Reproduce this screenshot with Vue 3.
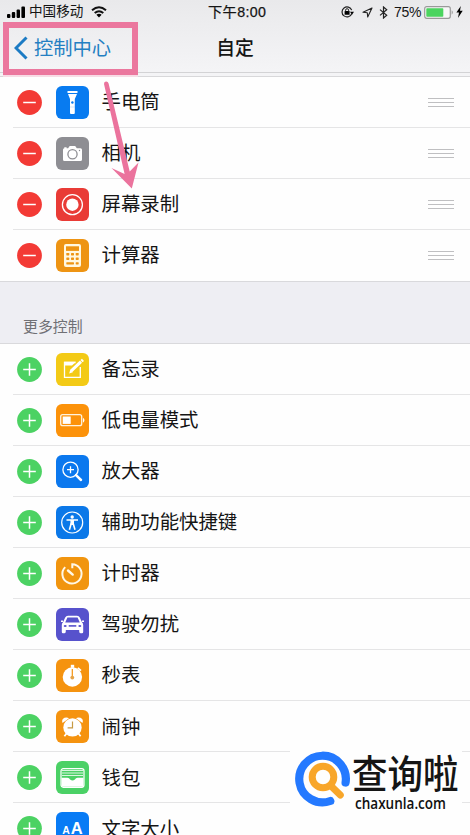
<script setup>
const active = [
  { name: '手电筒', icon: 'torch', color: '#087bf0' },
  { name: '相机', icon: 'camera', color: '#8e8e93' },
  { name: '屏幕录制', icon: 'record', color: '#e93b36' },
  { name: '计算器', icon: 'calc', color: '#ee9413' }
]
const more = [
  { name: '备忘录', icon: 'notes', color: '#f3ca16' },
  { name: '低电量模式', icon: 'power', color: '#fc920a' },
  { name: '放大器', icon: 'magnify', color: '#0b78ee' },
  { name: '辅助功能快捷键', icon: 'access', color: '#0b78e8' },
  { name: '计时器', icon: 'timer', color: '#f1950f' },
  { name: '驾驶勿扰', icon: 'car', color: '#5752cc' },
  { name: '秒表', icon: 'stopwatch', color: '#f5930f' },
  { name: '闹钟', icon: 'alarm', color: '#f5930f' },
  { name: '钱包', icon: 'wallet', color: '#4bd166' },
  { name: '文字大小', icon: 'text', color: '#087bf5' }
]
const sections = [
  { id: 'active', items: active },
  { id: 'more', title: '更多控制', items: more }
]
</script>

<template>
  <main class="screen">
    <header class="header">
      <div class="status">
        <div class="carrier">
          <svg class="signal" width="19" height="12" viewBox="0 0 19 12"><rect x="0" y="8" width="3.4" height="4" rx="1"/><rect x="4.8" y="6" width="3.4" height="6" rx="1"/><rect x="9.6" y="3.5" width="3.4" height="8.5" rx="1"/><rect x="14.4" y="0.5" width="3.6" height="11.5" rx="1"/></svg>
          <span>中国移动</span>
          <svg class="wifi" width="16" height="12" viewBox="0 0 16 12"><g fill="none" stroke="#111" stroke-width="2"><path d="M1 4.3Q8-1.8 15 4.3"/><path d="M3.7 7.1Q8 3.4 12.3 7.1"/></g><path d="M5.4 8.8Q8 6.8 10.6 8.8L8 11.6Z"/></svg>
        </div>
        <time class="clock">下午8:00</time>
        <div class="indicators">
          <svg class="lock" width="13" height="12" viewBox="0 0 13 12"><path d="M10.7 7.7A5 5 0 1 1 10.7 4.1" fill="none" stroke="#222" stroke-width="1.2"/><path d="M9 5.8H13L11 8.8Z"/><rect x="3.6" y="5.1" width="5" height="3.7" rx=".5"/><path d="M4.6 5.5V4.2a1.5 1.5 0 0 1 3 0v1.3" fill="none" stroke="#222"/></svg>
          <svg class="location" width="11" height="11" viewBox="0 0 11 11"><path d="M10 1L1 5.2L5.3 5.7L5.7 10Z" fill="none" stroke="#222" stroke-width="1.1" stroke-linejoin="round"/></svg>
          <svg class="bluetooth" width="9" height="13" viewBox="0 0 9 13"><path d="M1 3.6L7.7 9.2L4.5 12V1L7.7 3.8L1 9.4" fill="none" stroke="#222" stroke-width="1.2"/></svg>
          <span class="percent">75%</span>
          <svg class="battery" width="30" height="13" viewBox="0 0 30 13"><rect x=".7" y=".7" width="25.6" height="11.6" rx="2" fill="#f7f7f7" stroke="#999" stroke-width="1.2"/><rect x="2.3" y="2.3" width="17" height="8.4" rx=".7" fill="#4bd45f"/><path d="M27.7 4.3Q30 6.5 27.7 8.7Z" fill="#999"/></svg>
          <svg class="bolt" width="7" height="12" viewBox="0 0 7 12"><path d="M4.8 0L.4 6.6H3L2 12L6.7 4.8H4Z"/></svg>
        </div>
      </div>
      <nav class="nav">
        <a class="back">
          <svg width="14" height="24" viewBox="0 0 14 24"><path d="M12.5 1.5L2 12L12.5 22.5" fill="none" stroke="#1c7bc4" stroke-width="3"/></svg>
          <span>控制中心</span>
        </a>
        <h1>自定</h1>
      </nav>
    </header>

    <section v-for="section in sections" :key="section.id" :class="['section', section.id]">
      <h2 v-if="section.title">{{ section.title }}</h2>
      <ul>
        <li v-for="item in section.items" :key="item.name">
          <svg class="toggle" width="25" height="25" viewBox="0 0 25 25">
            <circle cx="12.5" cy="12.5" r="12.4" :fill="section.id === 'active' ? '#f33a35' : '#4cd263'"/>
            <path :d="section.id === 'active' ? 'M6.2 12.5H18.8' : 'M6.2 12.5H18.8M12.5 6.2V18.8'" stroke="#fff" stroke-width="1.5"/>
          </svg>
          <svg class="app-icon" width="33" height="33" viewBox="0 0 33 33">
            <rect width="33" height="33" rx="6" :fill="item.color"/>
            <g v-if="item.icon === 'torch'" fill="#fff"><path d="M11.5 5H21.5V7H11.5Z"/><path d="M12 8H21L18.8 13V27Q18.8 28 17.8 28H15Q14 28 14 27V13Z"/><circle cx="16.4" cy="16.5" r="1.2" fill="#087bf0"/><path d="M14 21H19" stroke="#a6cdf6" stroke-width=".5"/></g>
            <g v-else-if="item.icon === 'camera'"><path d="M8.3 11.2V10.2H10.6V11.2H12.1L13.7 9H19.2L20.8 11.2H24.5Q26 11.2 26 12.7V22.5Q26 24 24.5 24H8.4Q7 24 7 22.5V12.7Q7 11.2 8.3 11.2Z" fill="#fff"/><circle cx="16.5" cy="17.3" r="4.6" fill="none" stroke="#8e8e93" stroke-width="1.3"/><circle cx="23.5" cy="13.5" r=".7" fill="#8e8e93"/></g>
            <g v-else-if="item.icon === 'record'"><circle cx="16.4" cy="16.7" r="10" fill="none" stroke="#fff" stroke-width="1.3"/><circle cx="16.4" cy="16.7" r="6.2" fill="#fff"/></g>
            <g v-else-if="item.icon === 'calc'"><rect x="8" y="5" width="17" height="23" rx="2" fill="#fff8e1"/><g :fill="item.color"><rect x="10" y="7.3" width="13" height="4.6"/><rect x="10.3" y="14" width="3" height="2.4" rx=".6"/><rect x="15" y="14" width="3" height="2.4" rx=".6"/><rect x="19.7" y="14" width="3" height="2.4" rx=".6"/><rect x="10.3" y="18.5" width="3" height="2.4" rx=".6"/><rect x="15" y="18.5" width="3" height="2.4" rx=".6"/><rect x="19.7" y="18.5" width="3" height="2.4" rx=".6"/><rect x="10.3" y="23.2" width="7.7" height="2.2" rx=".6"/><rect x="19.7" y="23.2" width="3" height="2.2" rx=".6"/></g></g>
            <g v-else-if="item.icon === 'notes'"><path d="M19.5 9.5H8.5V24.3H24.3V14" fill="none" stroke="#fff" stroke-width="1.3"/><path d="M8 8.8H20L16 12.5H8Z" fill="#fff"/><path d="M15 18.2L25 8.6" stroke="#fff" stroke-width="3"/><path d="M25.5 8.2L27 6.8" stroke="#fff" stroke-width="3"/><path d="M13.2 20.4L14.2 16.8L16.8 19.3Z" fill="#fff"/></g>
            <g v-else-if="item.icon === 'power'"><rect x="4.7" y="10.7" width="21" height="11" rx="2" fill="none" stroke="#fff3df" stroke-width="1.3"/><rect x="6.7" y="12.5" width="8" height="7.4" fill="#fff"/><path d="M27 13.7Q30 16.2 27 18.7Z" fill="#fff"/></g>
            <g v-else-if="item.icon === 'magnify'" fill="none" stroke="#fff"><circle cx="14.5" cy="14.7" r="7.6" stroke-width="1.3"/><path d="M11 14.7H18M14.5 11.2V18.2" stroke-width="1.3"/><path d="M20 20.2L25 25" stroke-width="2.5" stroke-linecap="round"/></g>
            <g v-else-if="item.icon === 'access'" fill="none" stroke="#fff"><circle cx="16.2" cy="16.5" r="10.5" stroke-width="1.2"/><circle cx="16.2" cy="11" r="1.7" fill="#fff" stroke="none"/><path d="M10.5 14H22M16.2 14V18M15.3 17.3L13.4 23.8M17.1 17.3L19 23.8" stroke-width="1.6"/><path d="M14.4 14H18V19H14.4Z" fill="#fff" stroke="none"/></g>
            <g v-else-if="item.icon === 'timer'" fill="none" stroke="#fff8e8"><path d="M16.3 11.2V7.3A9.6 9.6 0 1 1 9.2 10.1" stroke-width="2"/><path d="M12 13.5L16.7 17.6" stroke-width="2.4" stroke-linecap="round"/></g>
            <g v-else-if="item.icon === 'car'" fill="#fff"><path d="M9.2 9.5Q10 7.7 12 7.7H21Q23 7.7 23.8 9.5L26 14.2Q27.2 15.2 27.2 17V24Q27.2 25.2 26 25.2H24.5Q23.2 25.2 23.2 23.5V22H9.8V23.5Q9.8 25.2 8.5 25.2H7Q5.8 25.2 5.8 24V17Q5.8 15.2 7 14.2Z"/><path d="M11.4 9.5H21.6L23.8 14.4H9.2Z" :fill="item.color"/><path d="M5 12.5H7V14H5ZM26 12.5H28V14H26Z"/><g :fill="item.color"><ellipse cx="9.2" cy="18" rx="1.5" ry="1.1"/><ellipse cx="23.8" cy="18" rx="1.5" ry="1.1"/><rect x="12.7" y="17.1" width="7.6" height="1.6"/></g></g>
            <g v-else-if="item.icon === 'stopwatch'" fill="#fff"><circle cx="16.4" cy="18" r="9.7"/><rect x="14.8" y="5.8" width="3.4" height="3"/><path d="M22.5 8.2L25.6 11L24.3 12.3L21.2 9.5Z"/><path d="M16.3 10V19" :stroke="item.color" stroke-width="1.2"/><circle cx="16.3" cy="18.6" r="1.9" fill="#e5a347"/></g>
            <g v-else-if="item.icon === 'alarm'" fill="#fff"><circle cx="16.5" cy="17.4" r="9.2"/><path d="M6.5 13Q5.2 9.3 8.5 7.8Q11 6.8 13 8.2ZM26.5 13Q27.8 9.3 24.5 7.8Q22 6.8 20 8.2Z"/><path d="M10.5 23.5L8.4 26.2M22.5 23.5L24.6 26.2" stroke="#fff" stroke-width="1.8"/><path d="M16.5 11.5V17.8H11.6" fill="none" stroke="#c79a44" stroke-width="1.2"/></g>
            <g v-else-if="item.icon === 'wallet'"><rect x="5" y="7.7" width="23" height="18.6" rx="2.2" fill="none" stroke="#fff" stroke-width="1.2"/><path d="M6 9.5H27M6 12H27M6 14.5H27" stroke="#d9f6df" stroke-width="1.2"/><path d="M5.5 16.8H11.4Q13.3 17 14.1 18.5Q16.5 20.5 18.9 18.5Q19.7 17 21.6 16.8H27.5V25.8H5.5Z" fill="#fff"/></g>
            <g v-else class="letter-icon"><text x="6.2" y="22" font-size="10.5">A</text><text x="14.8" y="22" font-size="16.5">A</text></g>
          </svg>
          <span class="label">{{ item.name }}</span>
          <span v-if="section.id === 'active'" class="grip"><i></i><i></i><i></i></span>
        </li>
      </ul>
    </section>

    <div class="back-highlight"></div>
    <svg class="pointer" width="42" height="112" viewBox="0 0 42 112"><path d="M2 4Q2 1.6 4.2 1.6Q6 1.6 6.6 3.6L27.7 91.5L36.5 82.5L29.8 108.5L9.5 88L22.6 94Z" fill="#eb739d"/></svg>
    <aside class="brand">
      <svg width="56" height="57" viewBox="0 0 56 57"><path d="M35.3 50A23.3 23.3 0 1 1 50.6 31.5" fill="none" stroke="#2479ff" stroke-width="8.2" stroke-linecap="round"/><circle cx="28" cy="26" r="10.8" fill="none" stroke="#f8a62a" stroke-width="7"/><path d="M35.5 34.5L45.3 44" stroke="#f8a62a" stroke-width="7" stroke-linecap="round"/></svg>
      <div class="brand-copy"><strong>查询啦</strong><span>chaxunla.com</span></div>
    </aside>
  </main>
</template>

<style>
body { margin: 0; overflow: hidden; }
</style>

<style scoped>
* { box-sizing: border-box; }
svg { flex-shrink: 0; display: block; }
.screen { position: relative; width: 470px; height: 835px; overflow: hidden; background: #fefefe; font-family: "Liberation Sans", "Noto Sans CJK SC", sans-serif; color: #151515; }
.header { height: 77px; background: linear-gradient(#e9e9eb, #f4f4f6 70px); border-bottom: 1px solid #d8d8da; }
.status { display: grid; grid-template-columns: 200px 80px 190px; height: 24px; align-items: center; font-size: 13.6px; line-height: 24px; }
.carrier { display: flex; align-items: center; padding-left: 7px; }
.carrier span { margin-left: 3px; }
.wifi { margin-left: 8px; }
.clock { padding-left: 8px; font-size: 14.2px; letter-spacing: .4px; white-space: nowrap; -webkit-text-stroke: .25px #151515; }
.indicators { display: flex; align-items: center; padding-left: 61px; }
.location { margin-left: 8px; }
.bluetooth { margin-left: 6px; }
.percent { width: 27px; margin-left: 6px; font-size: 14px; letter-spacing: -.3px; }
.battery { margin-left: 3px; }
.bolt { margin-left: 2px; }
.nav { display: grid; grid-template-columns: 184px 102px 1fr; height: 49px; align-items: center; border-bottom: 1px solid #d3d3d5; }
.back { display: flex; align-items: center; gap: 6px; padding-left: 14px; color: #247fc2; font-size: 19.3px; line-height: 28px; }
.back span { padding-top: 1px; }
h1 { margin: 0; padding-top: 1px; font-size: 18.8px; font-weight: 500; line-height: 28px; text-align: center; }
ul { list-style: none; padding: 0; margin: 0; }
li { position: relative; display: flex; align-items: center; height: 51.05px; padding: 0 17px; background: #fefefe; }
li:not(:last-child)::after { content: ""; position: absolute; left: 13px; right: 0; bottom: 0; height: 1px; background: #e5e5e6; }
.app-icon { margin-left: 14px; }
.label { margin-left: 12.5px; font-size: 19.4px; line-height: 28px; white-space: nowrap; }
.active .label { margin-top: -1px; }
.grip { display: grid; gap: 3px; width: 26px; margin-left: auto; margin-right: -1px; }
.grip i { height: 1px; background: #bfbfc1; }
h2 { display: flex; align-items: flex-end; margin: 0; height: 62.5px; padding: 0 0 4px 23px; background: #eeeef3; border: solid #d9d9dc; border-width: 1px 0; color: #707075; font-size: 14.9px; font-weight: 400; line-height: 24px; }
.letter-icon { fill: #fff; font-family: "Liberation Sans", sans-serif; font-weight: 700; }
.back-highlight { position: absolute; left: 3px; top: 22px; width: 135px; height: 53px; border: 6px solid #eb779e; box-shadow: 0 2px 0 #f7dce5; }
.pointer { position: absolute; left: 102px; top: 80px; }
.brand { position: absolute; left: 290px; top: 744px; width: 172px; height: 72px; display: flex; align-items: flex-start; padding: 7px 0 0 5px; background: #fefefe; }
.brand-copy { width: 108px; margin-left: 1px; display: grid; grid-template-rows: 44px 18px; }
.brand strong { font-family: "Noto Sans CJK SC", sans-serif; font-size: 35.5px; line-height: 42px; height: 44px; font-weight: 500; white-space: nowrap; transform: scaleY(1.08); }
.brand-copy span { justify-self: start; margin-left: 3px; font-family: "Open Sans", "Noto Sans", sans-serif; font-size: 16px; line-height: 17px; font-weight: 600; color: #111; transform: scaleX(.845); transform-origin: left; }
</style>
